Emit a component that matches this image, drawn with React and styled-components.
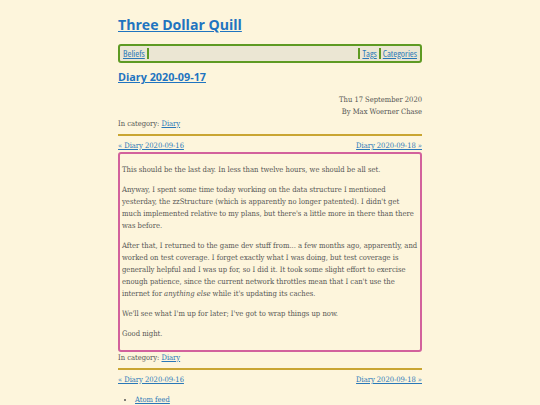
import React from 'react';
import styled, { createGlobalStyle } from 'styled-components';

const GlobalStyle = createGlobalStyle`
  body {
    margin: 0;
    background: #fdf5dc;
    color: #555;
    font-family: "DejaVu Serif", serif;
    font-stretch: condensed;
  }
  a { color: #2a78b8; }
`;

const Page = styled.div`
  width: 304px;
  margin: 0 auto;
  padding-top: 14px;
`;

const SiteTitle = styled.h1`
  margin: 0 0 8px;
  font-family: "Open Sans", sans-serif;
  font-stretch: normal;
  font-size: 14.1px;
  font-weight: 700;
  line-height: 22px;
  a { color: #1f74c0; }
`;

const Nav = styled.nav`
  display: flex;
  align-items: center;
  height: 13px;
  padding: 1px 1px;
  border: 2px solid #5e9a23;
  border-radius: 3px;
  background: #ebe6d3;
  font-family: "Open Sans", sans-serif;
  font-stretch: condensed;
  font-size: 9.5px;
  font-weight: 500;
`;

const NavLink = styled.a`
  padding: 0 2px;
  border-left: ${p => (p.$sep ? '2px solid #5e9a23' : 'none')};
  border-right: ${p => (p.$end ? '2px solid #5e9a23' : 'none')};
  line-height: 11px;
`;

const Spacer = styled.span`
  flex: 1;
`;

const PostTitle = styled.h2`
  margin: 6px 0 9px;
  font-family: "Open Sans", sans-serif;
  font-stretch: normal;
  font-size: 10.8px;
  font-weight: 700;
  line-height: 16px;
  a { color: #1f74c0; }
`;

const Meta = styled.div`
  text-align: right;
  font-size: 7.5px;
  line-height: 12px;
`;

const Small = styled.div`
  font-size: 7.5px;
  line-height: 12px;
`;

const Rule = styled.hr`
  margin: 4px 0 4px;
  border: 0;
  border-top: 2px solid #c9a532;
`;

const PageLinks = styled.div`
  display: flex;
  justify-content: space-between;
  font-size: 7.5px;
  line-height: 12px;
`;

const Article = styled.article`
  padding: 10px 0 2px 2px;
  border: 2px solid #d2619c;
  border-radius: 3px;
  font-size: 7.6px;
  line-height: 12px;
  p { margin: 0 0 8px; }
`;

const Feeds = styled.ul`
  margin: 8px 0 0;
  padding-left: 17px;
  font-size: 7.5px;
  line-height: 12px;
`;

export default function App() {
  return (
    <>
      <GlobalStyle />
      <Page>
        <SiteTitle><a href="#">Three Dollar Quill</a></SiteTitle>
        <Nav>
          <NavLink $end href="#">Beliefs</NavLink>
          <Spacer />
          <NavLink $sep href="#">Tags</NavLink>
          <NavLink $sep href="#">Categories</NavLink>
        </Nav>
        <PostTitle><a href="#">Diary 2020-09-17</a></PostTitle>
        <Meta>
          <div>Thu 17 September 2020</div>
          <div>By Max Woerner Chase</div>
        </Meta>
        <Small>In category: <a href="#">Diary</a></Small>
        <Rule />
        <PageLinks>
          <a href="#">« Diary 2020-09-16</a>
          <a href="#">Diary 2020-09-18 »</a>
        </PageLinks>
        <Article>
          <p>This should be the last day. In less than twelve hours, we should be all set.</p>
          <p>Anyway, I spent some time today working on the data structure I mentioned yesterday, the zzStructure (which is apparently no longer patented). I didn't get much implemented relative to my plans, but there's a little more in there than there was before.</p>
          <p>After that, I returned to the game dev stuff from... a few months ago, apparently, and worked on test coverage. I forget exactly what I was doing, but test coverage is generally helpful and I was up for, so I did it. It took some slight effort to exercise enough patience, since the current network throttles mean that I can't use the internet for <em>anything else</em> while it's updating its caches.</p>
          <p>We'll see what I'm up for later; I've got to wrap things up now.</p>
          <p>Good night.</p>
        </Article>
        <Small>In category: <a href="#">Diary</a></Small>
        <Rule />
        <PageLinks>
          <a href="#">« Diary 2020-09-16</a>
          <a href="#">Diary 2020-09-18 »</a>
        </PageLinks>
        <Feeds>
          <li><a href="#">Atom feed</a></li>
        </Feeds>
      </Page>
    </>
  );
}
